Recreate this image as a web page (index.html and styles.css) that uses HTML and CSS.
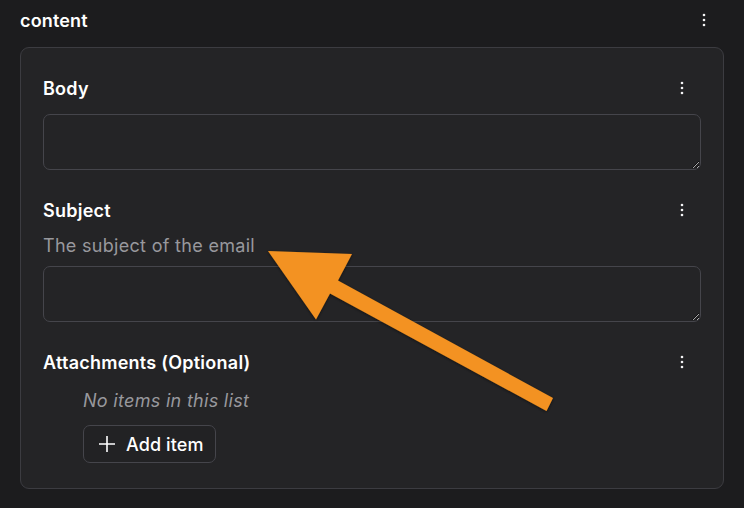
FILE: index.html
```html
<!DOCTYPE html>
<html lang="en">
<head>
<meta charset="utf-8">
<title>content</title>
<link rel="stylesheet" href="styles.css">
</head>
<body>
<div class="page">
  <div class="section-head">
    <span class="section-title">content</span>
    <button class="kebab" aria-label="More">
      <svg width="4" height="14" viewBox="0 0 4 14"><circle cx="2" cy="2" r="1.3"/><circle cx="2" cy="7" r="1.3"/><circle cx="2" cy="12" r="1.3"/></svg>
    </button>
  </div>
  <div class="card">
    <div class="field">
      <div class="field-head">
        <span class="field-label">Body</span>
        <button class="kebab" aria-label="More">
          <svg width="4" height="14" viewBox="0 0 4 14"><circle cx="2" cy="2" r="1.3"/><circle cx="2" cy="7" r="1.3"/><circle cx="2" cy="12" r="1.3"/></svg>
        </button>
      </div>
      <textarea class="input"></textarea>
    </div>
    <div class="field">
      <div class="field-head">
        <span class="field-label">Subject</span>
        <button class="kebab" aria-label="More">
          <svg width="4" height="14" viewBox="0 0 4 14"><circle cx="2" cy="2" r="1.3"/><circle cx="2" cy="7" r="1.3"/><circle cx="2" cy="12" r="1.3"/></svg>
        </button>
      </div>
      <div class="field-desc">The subject of the email</div>
      <textarea class="input"></textarea>
    </div>
    <div class="field">
      <div class="field-head">
        <span class="field-label">Attachments (Optional)</span>
        <button class="kebab" aria-label="More">
          <svg width="4" height="14" viewBox="0 0 4 14"><circle cx="2" cy="2" r="1.3"/><circle cx="2" cy="7" r="1.3"/><circle cx="2" cy="12" r="1.3"/></svg>
        </button>
      </div>
      <div class="list">
        <div class="empty">No items in this list</div>
        <button class="add-btn">
          <svg width="18" height="18" viewBox="0 0 18 18"><path d="M9 1v16M1 9h16" stroke="currentColor" stroke-width="1.6" fill="none"/></svg>
          <span>Add item</span>
        </button>
      </div>
    </div>
  </div>
</div>
<svg class="arrow" width="744" height="508" viewBox="0 0 744 508" aria-hidden="true">
  <defs>
    <filter id="sh" x="-20%" y="-20%" width="140%" height="140%">
      <feDropShadow dx="0" dy="1" stdDeviation="1.5" flood-color="#000" flood-opacity="0.5"/>
    </filter>
  </defs>
  <polygon filter="url(#sh)" fill="#f39220" points="268,251 352,254 338,280.5 553,398 546.5,411 330,293.5 316,319.5"/>
</svg>
</body>
</html>
```
FILE: styles.css
```css
* { box-sizing: border-box; }
html, body {
  margin: 0;
  padding: 0;
  background: #1c1c1e;
  color: #f4f4f5;
  font-family: Inter, "Noto Sans", sans-serif;
  color-scheme: dark;
}
.page {
  padding: 0 20px 0 20px;
  width: 744px;
  height: 508px;
}
.section-head {
  display: flex;
  align-items: center;
  justify-content: space-between;
  height: 40px;
  padding-right: 10px;
}
.section-title {
  font-size: 18px;
  font-weight: 600;
  color: #ffffff;
  letter-spacing: 0.15px;
}
.kebab {
  width: 20px;
  height: 24px;
  padding: 0;
  border: 0;
  background: transparent;
  display: flex;
  align-items: center;
  justify-content: center;
  fill: #f4f4f5;
}
.card {
  margin-top: 7px;
  border: 1px solid #3c3c41;
  border-radius: 9px;
  background: #242426;
  padding: 28px 22px 25px 22px;
  display: flex;
  flex-direction: column;
  gap: 28px;
}
.field {
  display: flex;
  flex-direction: column;
}
.field-head {
  display: flex;
  align-items: center;
  justify-content: space-between;
  height: 24px;
  padding-right: 9px;
}
.field-label {
  font-size: 18px;
  font-weight: 600;
  color: #ffffff;
  letter-spacing: 0.25px;
}
.field-desc {
  margin-top: 12px;
  font-size: 18px;
  line-height: 24px;
  letter-spacing: 0.3px;
  color: #98989d;
}
.input {
  display: block;
  margin-top: 14px;
  width: 100%;
  height: 56px;
  background: #242426;
  border: 1px solid #45454b;
  border-radius: 7px;
  resize: vertical;
  font-family: inherit;
  font-size: 16px;
  color: #fff;
  outline: none;
}
.field-desc + .input { margin-top: 8px; }
.list {
  padding-left: 40px;
  display: flex;
  flex-direction: column;
  align-items: flex-start;
}
.empty {
  margin-top: 15px;
  font-size: 18px;
  line-height: 24px;
  letter-spacing: 0.3px;
  font-style: italic;
  color: #98989d;
}
.add-btn {
  margin-top: 12px;
  height: 38px;
  padding: 0 11px 0 14px;
  display: flex;
  align-items: center;
  gap: 10px;
  border: 1px solid #45454b;
  border-radius: 7px;
  background: #222224;
  color: #ffffff;
  font-family: inherit;
  font-size: 18px;
  font-weight: 500;
  letter-spacing: 0.1px;
}
.arrow {
  position: absolute;
  left: 0;
  top: 0;
  pointer-events: none;
}
```
